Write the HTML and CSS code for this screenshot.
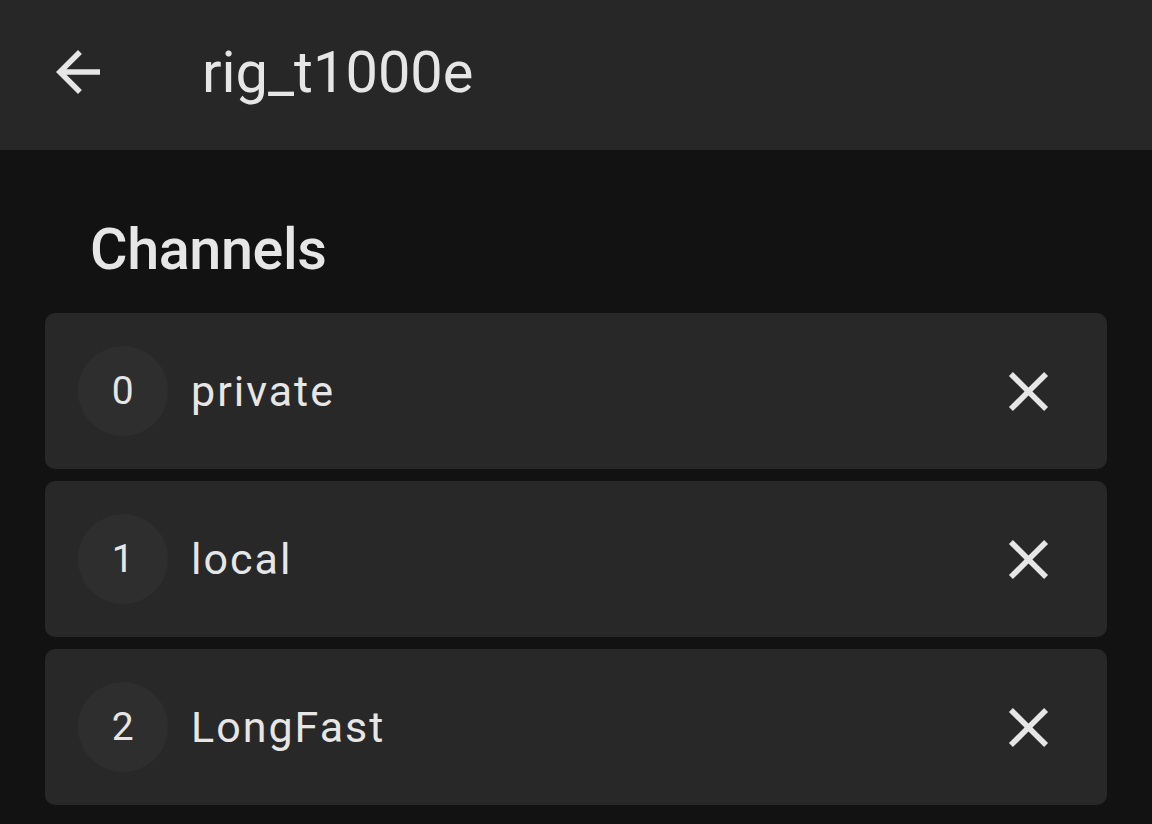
FILE: index.html
```html
<!DOCTYPE html>
<html lang="en">
<head>
<meta charset="utf-8">
<title>rig_t1000e</title>
<link rel="stylesheet" href="styles.css">
</head>
<body>
<header class="topbar">
  <button class="icon-btn back" aria-label="Back">
    <svg viewBox="0 0 24 24" width="66" height="66"><path d="M20 11H7.83l5.59-5.59L12 4l-8 8 8 8 1.41-1.41L7.83 13H20v-2z" fill="currentColor"/></svg>
  </button>
  <h1 class="title">rig_t1000e</h1>
</header>
<main class="content">
  <h2 class="section-title">Channels</h2>
  <ul class="channel-list">
    <li class="channel">
      <span class="badge">0</span>
      <span class="name">private</span>
      <button class="icon-btn close" aria-label="Remove">
        <svg viewBox="0 0 24 24" width="67" height="67"><path d="M19 6.41L17.59 5 12 10.59 6.41 5 5 6.41 10.59 12 5 17.59 6.41 19 12 13.41 17.59 19 19 17.59 13.41 12z" fill="currentColor"/></svg>
      </button>
    </li>
    <li class="channel">
      <span class="badge">1</span>
      <span class="name">local</span>
      <button class="icon-btn close" aria-label="Remove">
        <svg viewBox="0 0 24 24" width="67" height="67"><path d="M19 6.41L17.59 5 12 10.59 6.41 5 5 6.41 10.59 12 5 17.59 6.41 19 12 13.41 17.59 19 19 17.59 13.41 12z" fill="currentColor"/></svg>
      </button>
    </li>
    <li class="channel">
      <span class="badge">2</span>
      <span class="name">LongFast</span>
      <button class="icon-btn close" aria-label="Remove">
        <svg viewBox="0 0 24 24" width="67" height="67"><path d="M19 6.41L17.59 5 12 10.59 6.41 5 5 6.41 10.59 12 5 17.59 6.41 19 12 13.41 17.59 19 19 17.59 13.41 12z" fill="currentColor"/></svg>
      </button>
    </li>
  </ul>
</main>
</body>
</html>
```

FILE: styles.css
```css
* { box-sizing: border-box; }
html, body {
  margin: 0;
  padding: 0;
  background: #121212;
  color: #e6e6e6;
  font-family: Roboto, "Noto Sans", "Liberation Sans", sans-serif;
  height: 100%;
}
.icon-btn {
  background: none;
  border: 0;
  padding: 0;
  margin: 0;
  color: #e6e6e6;
  display: flex;
  align-items: center;
  justify-content: center;
  cursor: pointer;
}
.topbar {
  height: 150px;
  background: #272727;
  display: flex;
  align-items: center;
  padding-left: 45px;
}
.back {
  width: 66px;
  height: 66px;
  margin-bottom: 6px;
}
.title {
  margin: 0 0 5px 91px;
  font-size: 57.75px;
  line-height: 67px;
  font-weight: 400;
  color: #e6e6e6;
}
.content {
  padding: 65px 45px 0;
}
.section-title {
  margin: 0 0 28px 45px;
  font-size: 57.5px;
  letter-spacing: -0.4px;
  line-height: 70px;
  font-weight: 500;
  color: #e6e6e6;
}
.channel-list {
  list-style: none;
  margin: 0;
  padding: 0;
  display: flex;
  flex-direction: column;
  gap: 12px;
}
.channel {
  height: 156px;
  background: #282828;
  border-radius: 10px;
  display: flex;
  align-items: center;
  padding: 0 45px 0 33px;
}
.badge {
  width: 90px;
  height: 90px;
  border-radius: 50%;
  background: #2e2e2e;
  display: flex;
  align-items: center;
  justify-content: center;
  font-size: 39px;
  letter-spacing: 0.5px;
  flex: none;
}
.name {
  flex: 1;
  margin-left: 23px;
  font-size: 43px;
  letter-spacing: 2px;
  line-height: 50px;
}
.close {
  width: 67px;
  height: 67px;
  flex: none;
}
```
